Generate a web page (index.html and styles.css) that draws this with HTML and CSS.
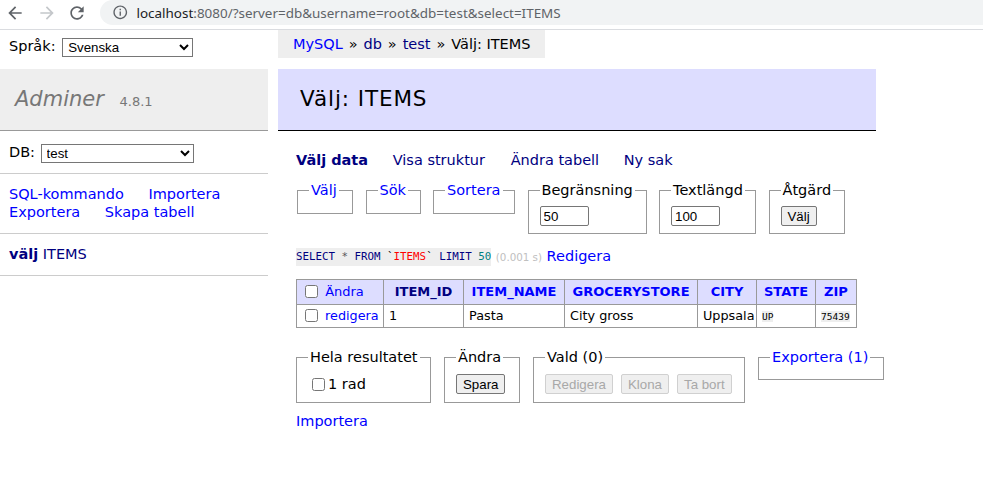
FILE: index.html
```html
<!DOCTYPE html>
<html lang="sv">
<head>
<meta charset="utf-8">
<title>Välj: ITEMS - Adminer</title>
<link rel="stylesheet" href="styles.css">
</head>
<body>
<header class="chrome">
  <div class="nav">
    <svg class="ico back" viewBox="0 0 24 24"><path d="M20 11H7.830l5.590-5.590L12 4l-8 8 8 8 1.410-1.410L7.830 13H20v-2z"/></svg>
    <svg class="ico fwd" viewBox="0 0 24 24"><path d="M12 4l-1.41 1.41L16.17 11H4v2h12.17l-5.58 5.59L12 20l8-8z"/></svg>
    <svg class="ico reload" viewBox="0 0 24 24"><path d="M17.65 6.35C16.2 4.9 14.21 4 12 4c-4.42 0-7.99 3.58-7.99 8s3.57 8 7.99 8c3.73 0 6.84-2.55 7.73-6h-2.08c-.82 2.33-3.04 4-5.65 4-3.31 0-6-2.69-6-6s2.69-6 6-6c1.66 0 3.14.69 4.22 1.78L13 11h7V4l-2.35 2.35z"/></svg>
  </div>
  <div class="omnibox">
    <svg class="info" viewBox="0 0 24 24"><path d="M11 7h2v2h-2zm0 4h2v6h-2zm1-9C6.48 2 2 6.480 2 12s4.48 10 10 10 10-4.48 10-10S17.52 2 12 2zm0 18c-4.41 0-8-3.59-8-8s3.59-8 8-8 8 3.59 8 8-3.59 8-8 8z"/></svg>
    <span class="url"><span class="host">localhost</span>:8080/?server=db&amp;username=root&amp;db=test&amp;select=ITEMS</span>
  </div>
</header>

<div class="page">
  <aside class="menu">
    <div class="lang">Språk: <select class="sel sel-lang"><option>Svenska</option></select></div>
    <h1 class="brand"><a class="h1link">Adminer</a> <span class="version">4.8.1</span></h1>
    <p class="dbs">DB: <select class="sel sel-db"><option>test</option></select></p>
    <p class="links"><a class="lnk">SQL-kommando</a> <a class="lnk">Importera</a><br><a class="lnk">Exportera</a> <a class="lnk">Skapa tabell</a></p>
    <ul class="tables"><li><a class="visited active">välj</a> <a class="visited">ITEMS</a></li></ul>
  </aside>

  <main class="content">
    <div class="breadcrumb"><a>MySQL</a> <span class="sep">»</span> <a class="visited">db</a> <span class="sep">»</span> <a class="visited">test</a> <span class="sep">»</span> Välj: ITEMS</div>
    <h2 class="title">Välj: ITEMS</h2>
    <p class="tabs"><a class="visited active">Välj data</a> <a class="visited">Visa struktur</a> <a class="visited">Ändra tabell</a> <a class="visited">Ny sak</a></p>

    <form class="filters">
      <fieldset class="fs fs-valj"><legend><a>Välj</a></legend></fieldset>
      <fieldset class="fs fs-sok"><legend><a>Sök</a></legend></fieldset>
      <fieldset class="fs fs-sort"><legend><a>Sortera</a></legend></fieldset>
      <fieldset class="fs fs-limit"><legend>Begränsning</legend><input class="num-input" type="text" value="50"></fieldset>
      <fieldset class="fs fs-text"><legend>Textlängd</legend><input class="num-input" type="text" value="100"></fieldset>
      <fieldset class="fs fs-action"><legend>Åtgärd</legend><button class="btn" type="button">Välj</button></fieldset>
    </form>

    <p class="query"><code class="sql"><span class="kw">SELECT</span> <span class="op">*</span> <span class="kw">FROM</span> <span class="bt">`</span><span class="ident">ITEMS</span><span class="bt">`</span> <span class="kw">LIMIT</span> <span class="num">50</span></code> <span class="time">(0.001 s)</span> <a class="edit-link">Redigera</a></p>

    <table class="data">
      <colgroup>
        <col class="w-chk"><col class="w-id"><col class="w-name"><col class="w-store"><col class="w-city"><col class="w-state"><col class="w-zip">
      </colgroup>
      <thead>
        <tr>
          <td class="chk-head"><input class="cb" type="checkbox"> <a>Ändra</a></td>
          <th><a class="visited">ITEM_ID</a></th>
          <th><a>ITEM_NAME</a></th>
          <th><a>GROCERYSTORE</a></th>
          <th><a>CITY</a></th>
          <th><a>STATE</a></th>
          <th><a>ZIP</a></th>
        </tr>
      </thead>
      <tbody>
        <tr>
          <td class="chk-cell"><input class="cb" type="checkbox"> <a>redigera</a></td>
          <td>1</td>
          <td>Pasta</td>
          <td>City gross</td>
          <td>Uppsala</td>
          <td><code class="cell-code">UP</code></td>
          <td><code class="cell-code">75439</code></td>
        </tr>
      </tbody>
    </table>

    <div class="footer">
      <fieldset class="fs fs-all"><legend>Hela resultatet</legend><label class="all"><input class="cb" type="checkbox">1 rad</label></fieldset>
      <fieldset class="fs fs-edit"><legend>Ändra</legend><button class="btn" type="button">Spara</button></fieldset>
      <fieldset class="fs fs-sel"><legend>Vald (0)</legend><div class="btns"><button class="btn" type="button" disabled>Redigera</button><button class="btn" type="button" disabled>Klona</button><button class="btn" type="button" disabled>Ta bort</button></div></fieldset>
      <fieldset class="fs fs-export"><legend><a>Exportera (1)</a></legend></fieldset>
    </div>

    <p class="import"><a>Importera</a></p>
  </main>
</div>
</body>
</html>
```

FILE: styles.css
```css
* { box-sizing: border-box; }
html, body { margin: 0; padding: 0; }
body {
  font: 14.5px/18px "DejaVu Sans", Verdana, sans-serif;
  color: #000;
  background: #fff;
  width: 983px;
  height: 490px;
  overflow: hidden;
}
a { color: #00f; text-decoration: none; }
a.visited { color: #000080; }
.active { font-weight: bold; }

/* browser chrome */
.chrome {
  height: 30px;
  border-bottom: 1px solid #dadce0;
  display: flex;
  align-items: flex-start;
}
.nav { display: flex; align-items: center; height: 25px; padding-left: 5px; }
.ico { width: 20px; height: 20px; display: block; fill: #5f6368; }
.ico.fwd { margin-left: 12px; fill: #c4c7ca; }
.ico.reload { margin-left: 10px; }
.omnibox {
  flex: 1;
  margin-left: 13px;
  height: 25px;
  background: #f1f3f4;
  border-radius: 13px 0 0 13px;
  display: flex;
  align-items: center;
  padding-left: 12px;
}
.info { width: 16.5px; height: 16.5px; fill: #5f6368; display: block; }
.url {
  margin-left: 8px;
  font: 13.45px/18px "Noto Sans", "Open Sans", sans-serif;
  color: #5f6368;
  white-space: nowrap;
}
.host { color: #202124; }

/* page */
.page { display: flex; align-items: flex-start; }
.menu { width: 268px; flex: none; }
.lang { padding: 4px 9px; line-height: 25px; height: 33px; }
.sel {
  font: 13.3px "Liberation Sans", Arial, sans-serif;
  height: 19px;
  padding: 0 0 0 1px;
  border: 1px solid #767676;
  border-radius: 0;
  background: #fff;
  color: #000;
  vertical-align: middle;
}
.sel-lang { width: 131px; margin-left: 2px; }
.sel-db { width: 153px; margin-left: 1px; }

.brand {
  margin: 6px 0 0;
  height: 62px;
  line-height: 60px;
  padding: 0 15px;
  background: #eee;
  border-bottom: 1px solid #999;
  font-weight: normal;
  font-size: 21px;
  color: #777;
}
.h1link { color: #777; font-style: italic; }
.version { font-size: 13px; color: #777; margin-left: 9px; }

.dbs { margin: 0; padding: 11px 9px; line-height: 20px; border-bottom: 1px solid #ccc; height: 43px; }
.links { margin: 0; padding: 11px 9px 12px; border-bottom: 1px solid #ccc; height: 60px; }
.lnk { margin-right: 20px; white-space: nowrap; }
.tables { margin: 0; padding: 11px 9px; list-style: none; border-bottom: 1px solid #ccc; height: 42px; }

.content { margin-left: 28px; width: 580px; }
.breadcrumb {
  width: fit-content;
  margin-left: -18px;
  height: 28px;
  line-height: 28px;
  padding: 0 15px;
  background: #eee;
  white-space: nowrap;
}
.sep { display: inline-block; width: 11.5px; text-align: center; }
.title {
  margin: 11px 0 20px -18px;
  height: 62px;
  line-height: 60px;
  padding: 0 22px;
  background: #ddf;
  border-bottom: 1px solid #000;
  font-weight: normal;
  font-size: 21.5px;
  letter-spacing: 0.9px;
}
.tabs { margin: 0; white-space: nowrap; }
.tabs a { margin-right: 20px; }
.tabs a:nth-child(2) { margin-right: 21px; }

.filters { display: flex; gap: 12.5px; margin: 12px 0 0 1px; align-items: flex-start; }
.fs {
  margin: 0;
  padding: 7px 11px;
  border: 1px solid #999;
  min-width: 0;
}
.fs legend { padding: 0 2px; line-height: 18px; }
.fs-valj { width: 56px; }
.fs-sok { width: 55px; }
.fs-sort { width: 82px; }
.fs-limit { width: 119px; }
.fs-text { width: 97px; }
.fs-action { width: 76px; }
.num-input {
  display: block;
  width: 49px;
  height: 20px;
  font: 13.3px "Liberation Sans", Arial, sans-serif;
  padding: 1px 3px;
  border: 1px solid #767676;
  border-radius: 2px;
}
.btn {
  display: block;
  height: 20px;
  font: 13.3px "Liberation Sans", Arial, sans-serif;
  padding: 0 6px;
  background: #efefef;
  color: #000;
  border: 1px solid #767676;
  border-radius: 2px;
}
.btn:disabled { color: #a8a8a8; border-color: #d0d0d0; background: #efefef; }

.query { margin: 13px 0 0; white-space: nowrap; }
.sql { font: 10.8px/16px "DejaVu Sans Mono", monospace; background: #eee; display: inline-block; padding: 1px 0; vertical-align: 1px; }
.kw { color: #000080; }
.op { color: #555; }
.bt { color: #000; }
.ident { color: #f00; }
.num { color: #008080; }
.time { color: silver; font-size: 10.3px; }

.data { border-collapse: collapse; margin-top: 13px; font-size: 12.8px; line-height: 16px; table-layout: fixed; width: 560px; }
.w-chk { width: 87px; }
.w-id { width: 80px; }
.w-name { width: 101px; }
.w-store { width: 133px; }
.w-city { width: 59px; }
.w-state { width: 59px; }
.w-zip { width: 41px; }
.data td, .data th { border: 1px solid #999; padding: 3px 4px; white-space: nowrap; text-align: left; overflow: visible; }
.data tbody td { padding-left: 5px; }
.data thead td, .data thead th { background: #ddf; padding: 4px 5px; font-size: 13px; }
.data thead th { text-align: center; }
.data thead td.chk-head, .data tbody td.chk-cell { padding-left: 4px; }
.cb { width: 13px; height: 13px; margin: 0 3px 0 4px; vertical-align: -2px; }
.cell-code { font: 9.5px "DejaVu Sans Mono", monospace; background: #eee; }

.footer { display: flex; gap: 13px; margin-top: 20px; align-items: flex-start; white-space: nowrap; width: 620px; }
.fs-all { width: 135px; }
.fs-edit { width: 76px; }
.fs-sel { width: 212px; }
.fs-export { width: 126px; padding-bottom: 6px; }
.all { display: flex; align-items: center; height: 22px; }
.footer .btn { margin-top: 1px; margin-bottom: 1px; }
.btns { display: flex; gap: 8px; }

.import { margin: 9px 0 0; }
```
